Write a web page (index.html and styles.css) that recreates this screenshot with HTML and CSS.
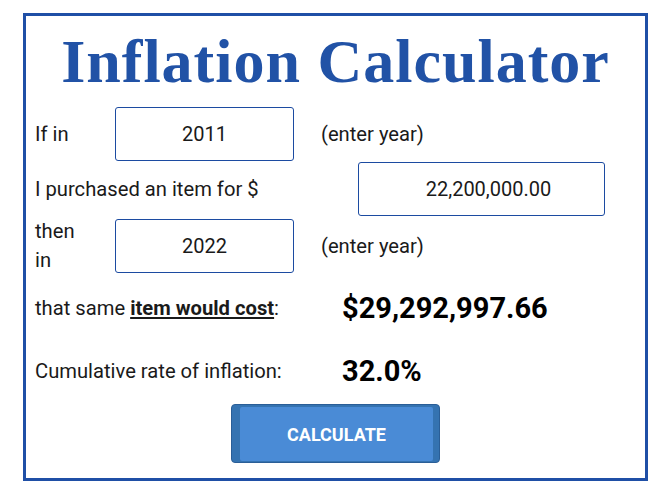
FILE: index.html
```html
<!DOCTYPE html>
<html lang="en">
<head>
  <meta charset="UTF-8">
  <meta name="viewport" content="width=device-width, initial-scale=1.0">
  <title>Inflation Calculator</title>
  <link rel="stylesheet" href="styles.css">
</head>
<body>
  <!-- calculator frame -->
  <div class="calc">
    <h1 class="title">Inflation Calculator</h1>

    <div class="row">
      <span class="label short">If in</span>
      <input class="field year" type="text" value="2011">
      <span class="hint">(enter year)</span>
    </div>

    <div class="row row-amount">
      <span class="label">I purchased an item for $</span>
      <input class="field amount" type="text" value="22,200,000.00">
    </div>

    <div class="row row-then">
      <span class="label short">then in</span>
      <input class="field year" type="text" value="2022">
      <span class="hint">(enter year)</span>
    </div>

    <!-- results -->
    <div class="row result">
      <span class="label wide">that same <u class="em">item would cost</u>:</span>
      <span class="value">$29,292,997.66</span>
    </div>

    <div class="row result rate">
      <span class="label wide">Cumulative rate of inflation:</span>
      <span class="value">32.0%</span>
    </div>

    <div class="actions">
      <button class="btn" type="button"><span class="btn-face">CALCULATE</span></button>
    </div>
  </div>
</body>
</html>
```

FILE: styles.css
```css
body {
  margin: 0;
  background: #fff;
  font-family: Roboto, "Liberation Sans", sans-serif;
  color: #1a1a1a;
}
/* outer blue frame */
.calc {
  margin: 13px 0 0 23px;
  width: 610px;
  border: 3px solid #1f4fa6;
  padding: 0 0 15px 9px;
}
.title {
  margin: 0;
  height: 91px;
  line-height: 91px;
  padding-right: 9px;
  text-align: center;
  font-family: "Liberation Serif", "Times New Roman", serif;
  font-weight: bold;
  font-size: 62px;
  letter-spacing: 1px;
  color: #2152a6;
}
.row {
  display: flex;
  align-items: center;
  height: 54px;
  font-size: 20.2px;
}
.row-amount { margin-top: 1px; }
.row-then { margin-top: 3px; }
.label.short {
  width: 50px;
  margin-right: 30px;
  line-height: 29px;
}
.field {
  box-sizing: border-box;
  height: 54px;
  border: 1px solid #1c4ba1;
  border-radius: 3px;
  font-family: Roboto, "Liberation Sans", sans-serif;
  font-size: 20px;
  color: #1a1a1a;
  text-align: center;
  padding: 0;
  background: #fff;
}
.field.year { width: 179px; }
.field.amount {
  width: 247px;
  margin-left: auto;
  margin-right: 40px;
  padding-left: 14px;
}
.hint { margin-left: 27px; }
.result { margin-top: 8px; }
.result.rate { margin-top: 9px; }
.label.wide { width: 307px; }
.em { font-weight: bold; }
.value {
  font-size: 29px;
  font-weight: bold;
  color: #000;
}
.actions {
  display: flex;
  justify-content: center;
  margin-top: 6px;
  padding-right: 9px;
}
.btn {
  display: flex;
  width: 209px;
  height: 59px;
  padding: 2px 6px 1px 8px;
  border: 1px solid #2a5e97;
  border-radius: 4px;
  background: #3573b1;
  cursor: pointer;
}
.btn-face {
  flex: 1;
  display: flex;
  align-items: center;
  justify-content: center;
  border-radius: 2px;
  background: #4a8bd6;
  color: #fff;
  font-family: Roboto, "Liberation Sans", sans-serif;
  font-weight: bold;
  font-size: 18px;
}
```
